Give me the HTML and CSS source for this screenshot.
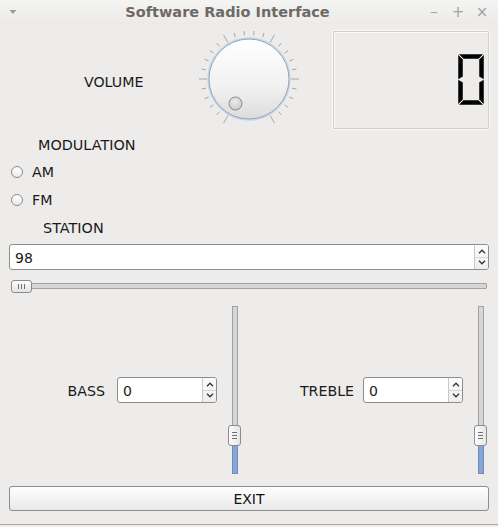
FILE: index.html
```html
<!DOCTYPE html>
<html>
<head>
<meta charset="utf-8">
<title>Software Radio Interface</title>
<link rel="stylesheet" href="styles.css">
</head>
<body>
<div class="window">
  <div class="titlebar">
    <span class="menu-arrow">
      <svg width="8" height="6" viewBox="0 0 8 6"><polygon points="0.5,1 7.5,1 4,5" fill="#9a9a9a"/></svg>
    </span>
    <span class="title">Software Radio Interface</span>
    <span class="controls">
      <span class="ctl">–</span>
      <span class="ctl">+</span>
      <span class="ctl">×</span>
    </span>
  </div>
  <div class="content">
    <div class="top-row">
      <div class="volume-label">VOLUME</div>
      <svg class="knob" width="100" height="100" viewBox="0 0 100 100" id="knob">
        <defs>
          <linearGradient id="kg" x1="0" y1="0" x2="0" y2="1">
            <stop offset="0" stop-color="#ffffff"/>
            <stop offset="0.6" stop-color="#f1f1f1"/>
            <stop offset="1" stop-color="#dcdcdc"/>
          </linearGradient>
          <radialGradient id="dg" cx="0.45" cy="0.35" r="0.7">
            <stop offset="0" stop-color="#ececec"/>
            <stop offset="1" stop-color="#c8c8c8"/>
          </radialGradient>
        </defs>
        <g id="ticks" stroke="#a6a6a6" stroke-width="1"></g>
        <circle cx="50" cy="48" r="41" fill="none" stroke="#c9d6e6" stroke-width="1.5"/>
        <circle cx="50" cy="48" r="40" fill="url(#kg)" stroke="#8fa4be" stroke-width="1"/>
        <circle cx="36.5" cy="72.5" r="6.5" fill="url(#dg)" stroke="#8c8c8c" stroke-width="1"/>
      </svg>
      <div class="lcd">
        <svg width="26" height="51" viewBox="0 0 26 51">
          <g fill="#000" stroke="#000" stroke-width="0.5">
            <polygon points="1.5,0.5 24.5,0.5 20.5,4.5 5.5,4.5"/>
            <polygon points="0.5,1.5 4.5,5.5 4.5,22.5 0.5,24.8"/>
            <polygon points="25.5,1.5 25.5,24.8 21.5,22.5 21.5,5.5"/>
            <polygon points="0.5,26.2 4.5,28.5 4.5,45.5 0.5,49.5"/>
            <polygon points="25.5,26.2 25.5,49.5 21.5,45.5 21.5,28.5"/>
            <polygon points="1.5,50.5 5.5,46.5 20.5,46.5 24.5,50.5"/>
          </g>
        </svg>
      </div>
    </div>

    <div class="section-label mod-label">MODULATION</div>
    <label class="radio-row first"><span class="radio"></span><span>AM</span></label>
    <label class="radio-row"><span class="radio"></span><span>FM</span></label>
    <div class="section-label station-label">STATION</div>

    <div class="spinbox wide">
      <span class="spin-value">98</span>
      <span class="spin-arrows">
        <span class="arrow up"><svg width="8" height="5" viewBox="0 0 8 5"><polyline points="1,4.2 4,1.2 7,4.2" fill="none" stroke="#333" stroke-width="1.3"/></svg></span>
        <span class="arrow down"><svg width="8" height="5" viewBox="0 0 8 5"><polyline points="1,0.8 4,3.8 7,0.8" fill="none" stroke="#333" stroke-width="1.3"/></svg></span>
      </span>
    </div>

    <div class="hslider">
      <div class="htrack"></div>
      <div class="hhandle"><span class="grip-v"></span><span class="grip-v"></span><span class="grip-v"></span></div>
    </div>

    <div class="eq">
      <div class="eq-group">
        <span class="eq-label">BASS</span>
        <div class="spinbox small">
          <span class="spin-value">0</span>
          <span class="spin-arrows">
            <span class="arrow up"><svg width="8" height="5" viewBox="0 0 8 5"><polyline points="1,4.2 4,1.2 7,4.2" fill="none" stroke="#333" stroke-width="1.3"/></svg></span>
            <span class="arrow down"><svg width="8" height="5" viewBox="0 0 8 5"><polyline points="1,0.8 4,3.8 7,0.8" fill="none" stroke="#333" stroke-width="1.3"/></svg></span>
          </span>
        </div>
        <div class="vslider">
          <div class="vtrack"></div>
          <div class="vfill"></div>
          <div class="vhandle"><span class="grip-h"></span><span class="grip-h"></span><span class="grip-h"></span></div>
        </div>
      </div>
      <div class="eq-group">
        <span class="eq-label treble">TREBLE</span>
        <div class="spinbox small">
          <span class="spin-value">0</span>
          <span class="spin-arrows">
            <span class="arrow up"><svg width="8" height="5" viewBox="0 0 8 5"><polyline points="1,4.2 4,1.2 7,4.2" fill="none" stroke="#333" stroke-width="1.3"/></svg></span>
            <span class="arrow down"><svg width="8" height="5" viewBox="0 0 8 5"><polyline points="1,0.8 4,3.8 7,0.8" fill="none" stroke="#333" stroke-width="1.3"/></svg></span>
          </span>
        </div>
        <div class="vslider">
          <div class="vtrack"></div>
          <div class="vfill"></div>
          <div class="vhandle"><span class="grip-h"></span><span class="grip-h"></span><span class="grip-h"></span></div>
        </div>
      </div>
    </div>

    <button class="exit">EXIT</button>
    <div class="bottom-line"></div>
  </div>
</div>
<script src="script.js"></script>
</body>
</html>
```

FILE: script.js
```js
(function () {
  var g = document.getElementById('ticks');
  var ns = 'http://www.w3.org/2000/svg';
  var cx = 50, cy = 48;
  for (var i = 0; i <= 25; i++) {
    var deg = -150 + i * 12;
    var long = (i % 5 === 0);
    var r1 = long ? 42 : 44;
    var r2 = long ? 51 : 48.5;
    var a = deg * Math.PI / 180;
    var sx = Math.sin(a), sy = -Math.cos(a);
    var l = document.createElementNS(ns, 'line');
    l.setAttribute('x1', (cx + sx * r1).toFixed(2));
    l.setAttribute('y1', (cy + sy * r1).toFixed(2));
    l.setAttribute('x2', (cx + sx * r2).toFixed(2));
    l.setAttribute('y2', (cy + sy * r2).toFixed(2));
    g.appendChild(l);
  }
})();
```

FILE: styles.css
```css
* { box-sizing: border-box; }
html, body {
  margin: 0;
  padding: 0;
  background: #edeceb;
  font-family: "DejaVu Sans", Verdana, sans-serif;
  color: #1a1a1a;
}
.window {
  width: 498px;
  height: 527px;
  display: flex;
  flex-direction: column;
  overflow: hidden;
}
.titlebar {
  height: 24px;
  flex: none;
  display: flex;
  align-items: center;
  background: linear-gradient(#f4f4f3, #ecebea);
}
.menu-arrow {
  width: 8px;
  margin-left: 9px;
  display: flex;
}
.title {
  flex: 1;
  text-align: center;
  font-weight: bold;
  font-size: 14.5px;
  color: #6e6966;
  padding-left: 16px;
}
.controls {
  display: flex;
  align-items: center;
  margin-right: 4px;
  color: #a3a3a3;
  font-size: 15px;
}
.ctl { width: 24px; text-align: center; }
.content {
  flex: 1;
  display: flex;
  flex-direction: column;
  padding: 0 9px;
}
.top-row {
  margin-top: 7px;
  height: 100px;
  display: flex;
  align-items: center;
}
.volume-label {
  width: 190px;
  padding-left: 75px;
  font-size: 14.2px;
  padding-top: 1px;
}
.knob { flex: none; }
.lcd {
  margin-left: auto;
  width: 156px;
  height: 98px;
  align-self: flex-start;
  border: 1px solid #cfcecd;
  box-shadow: inset 1px 1px 0 #fbfbfb, 0 0 0 1px #fafafa;
  display: flex;
  align-items: center;
  justify-content: flex-end;
  padding-right: 4px;
  padding-bottom: 1px;
}
.section-label {
  font-size: 14.4px;
  line-height: 20px;
  height: 20px;
}
.mod-label { margin-top: 4px; padding-left: 29px; }
.station-label { margin-top: 8px; padding-left: 34px; }
.radio-row {
  display: flex;
  align-items: center;
  height: 20px;
  margin-top: 8px;
  font-size: 14.2px;
}
.radio-row.first { margin-top: 7px; }
.radio {
  width: 12px;
  height: 12px;
  border-radius: 50%;
  border: 1px solid #8a8a8a;
  background: linear-gradient(#ffffff, #ececec);
  margin-left: 2px;
  margin-right: 9px;
}
.spinbox {
  display: flex;
  align-items: stretch;
  background: #fff;
  border: 1px solid #8d8d8d;
  border-radius: 3px;
  height: 26px;
  font-size: 14px;
}
.spinbox.wide { margin-top: 6px; }
.spin-value {
  flex: 1;
  display: flex;
  align-items: center;
  padding-left: 5px;
  padding-top: 1px;
}
.spin-arrows {
  width: 14px;
  display: flex;
  flex-direction: column;
  border-left: 1px solid #c9c9c9;
  background: linear-gradient(#fbfbfb, #eeeeee);
  border-radius: 0 2px 2px 0;
}
.arrow {
  flex: 1;
  display: flex;
  align-items: center;
  justify-content: center;
}
.arrow.up { border-bottom: 1px solid #d5d5d5; padding-top: 1px; }
.arrow.down { padding-bottom: 1px; }
.hslider {
  position: relative;
  margin: 10px 2px 0 2px;
  height: 13px;
}
.htrack {
  position: absolute;
  left: 0;
  right: 0;
  top: 3px;
  height: 6px;
  border: 1px solid #a3a3a3;
  background: #d6d6d6;
  border-radius: 1px;
}
.hhandle {
  position: absolute;
  left: 0;
  top: 0;
  width: 21px;
  height: 13px;
  border: 1px solid #8c8c8c;
  border-radius: 3px;
  background: linear-gradient(#fdfdfd, #e4e4e4);
  display: flex;
  align-items: center;
  justify-content: center;
  gap: 2px;
}
.grip-v { width: 1px; height: 5px; background: #707070; }
.eq {
  margin-top: 13px;
  height: 168px;
  display: grid;
  grid-template-columns: 232px 1fr;
  padding-right: 2px;
}
.eq-group {
  display: flex;
  align-items: center;
  justify-content: flex-end;
}
.eq-label { font-size: 14.2px; margin-right: 12px; padding-top: 1px; }
.eq-label.treble { margin-right: 9px; }
.spinbox.small { width: 100px; margin-right: 11px; }
.vslider {
  position: relative;
  width: 13px;
  height: 168px;
}
.vtrack {
  position: absolute;
  left: 4px;
  width: 6px;
  top: 0;
  bottom: 0;
  border: 1px solid #a3a3a3;
  background: #d6d6d6;
}
.vfill {
  position: absolute;
  left: 4px;
  width: 6px;
  top: 138px;
  bottom: 0;
  border: 1px solid #6d8bbd;
  background: #86a6d6;
}
.vhandle {
  position: absolute;
  left: 0;
  top: 119px;
  width: 13px;
  height: 21px;
  border: 1px solid #8c8c8c;
  border-radius: 3px;
  background: linear-gradient(90deg, #fdfdfd, #e6e6e6);
  display: flex;
  flex-direction: column;
  align-items: center;
  justify-content: center;
  gap: 2px;
}
.grip-h { width: 5px; height: 1px; background: #707070; }
.exit {
  margin-top: 12px;
  height: 25px;
  width: 100%;
  border: 1px solid #8d8d8d;
  border-radius: 3px;
  background: linear-gradient(#ffffff, #e9e9e9);
  font-family: "DejaVu Sans", Verdana, sans-serif;
  font-size: 14px;
  color: #111;
  padding: 0;
}
.bottom-line {
  margin: 13px -9px 0 -9px;
  height: 1px;
  background: #a8a8a8;
}
```
